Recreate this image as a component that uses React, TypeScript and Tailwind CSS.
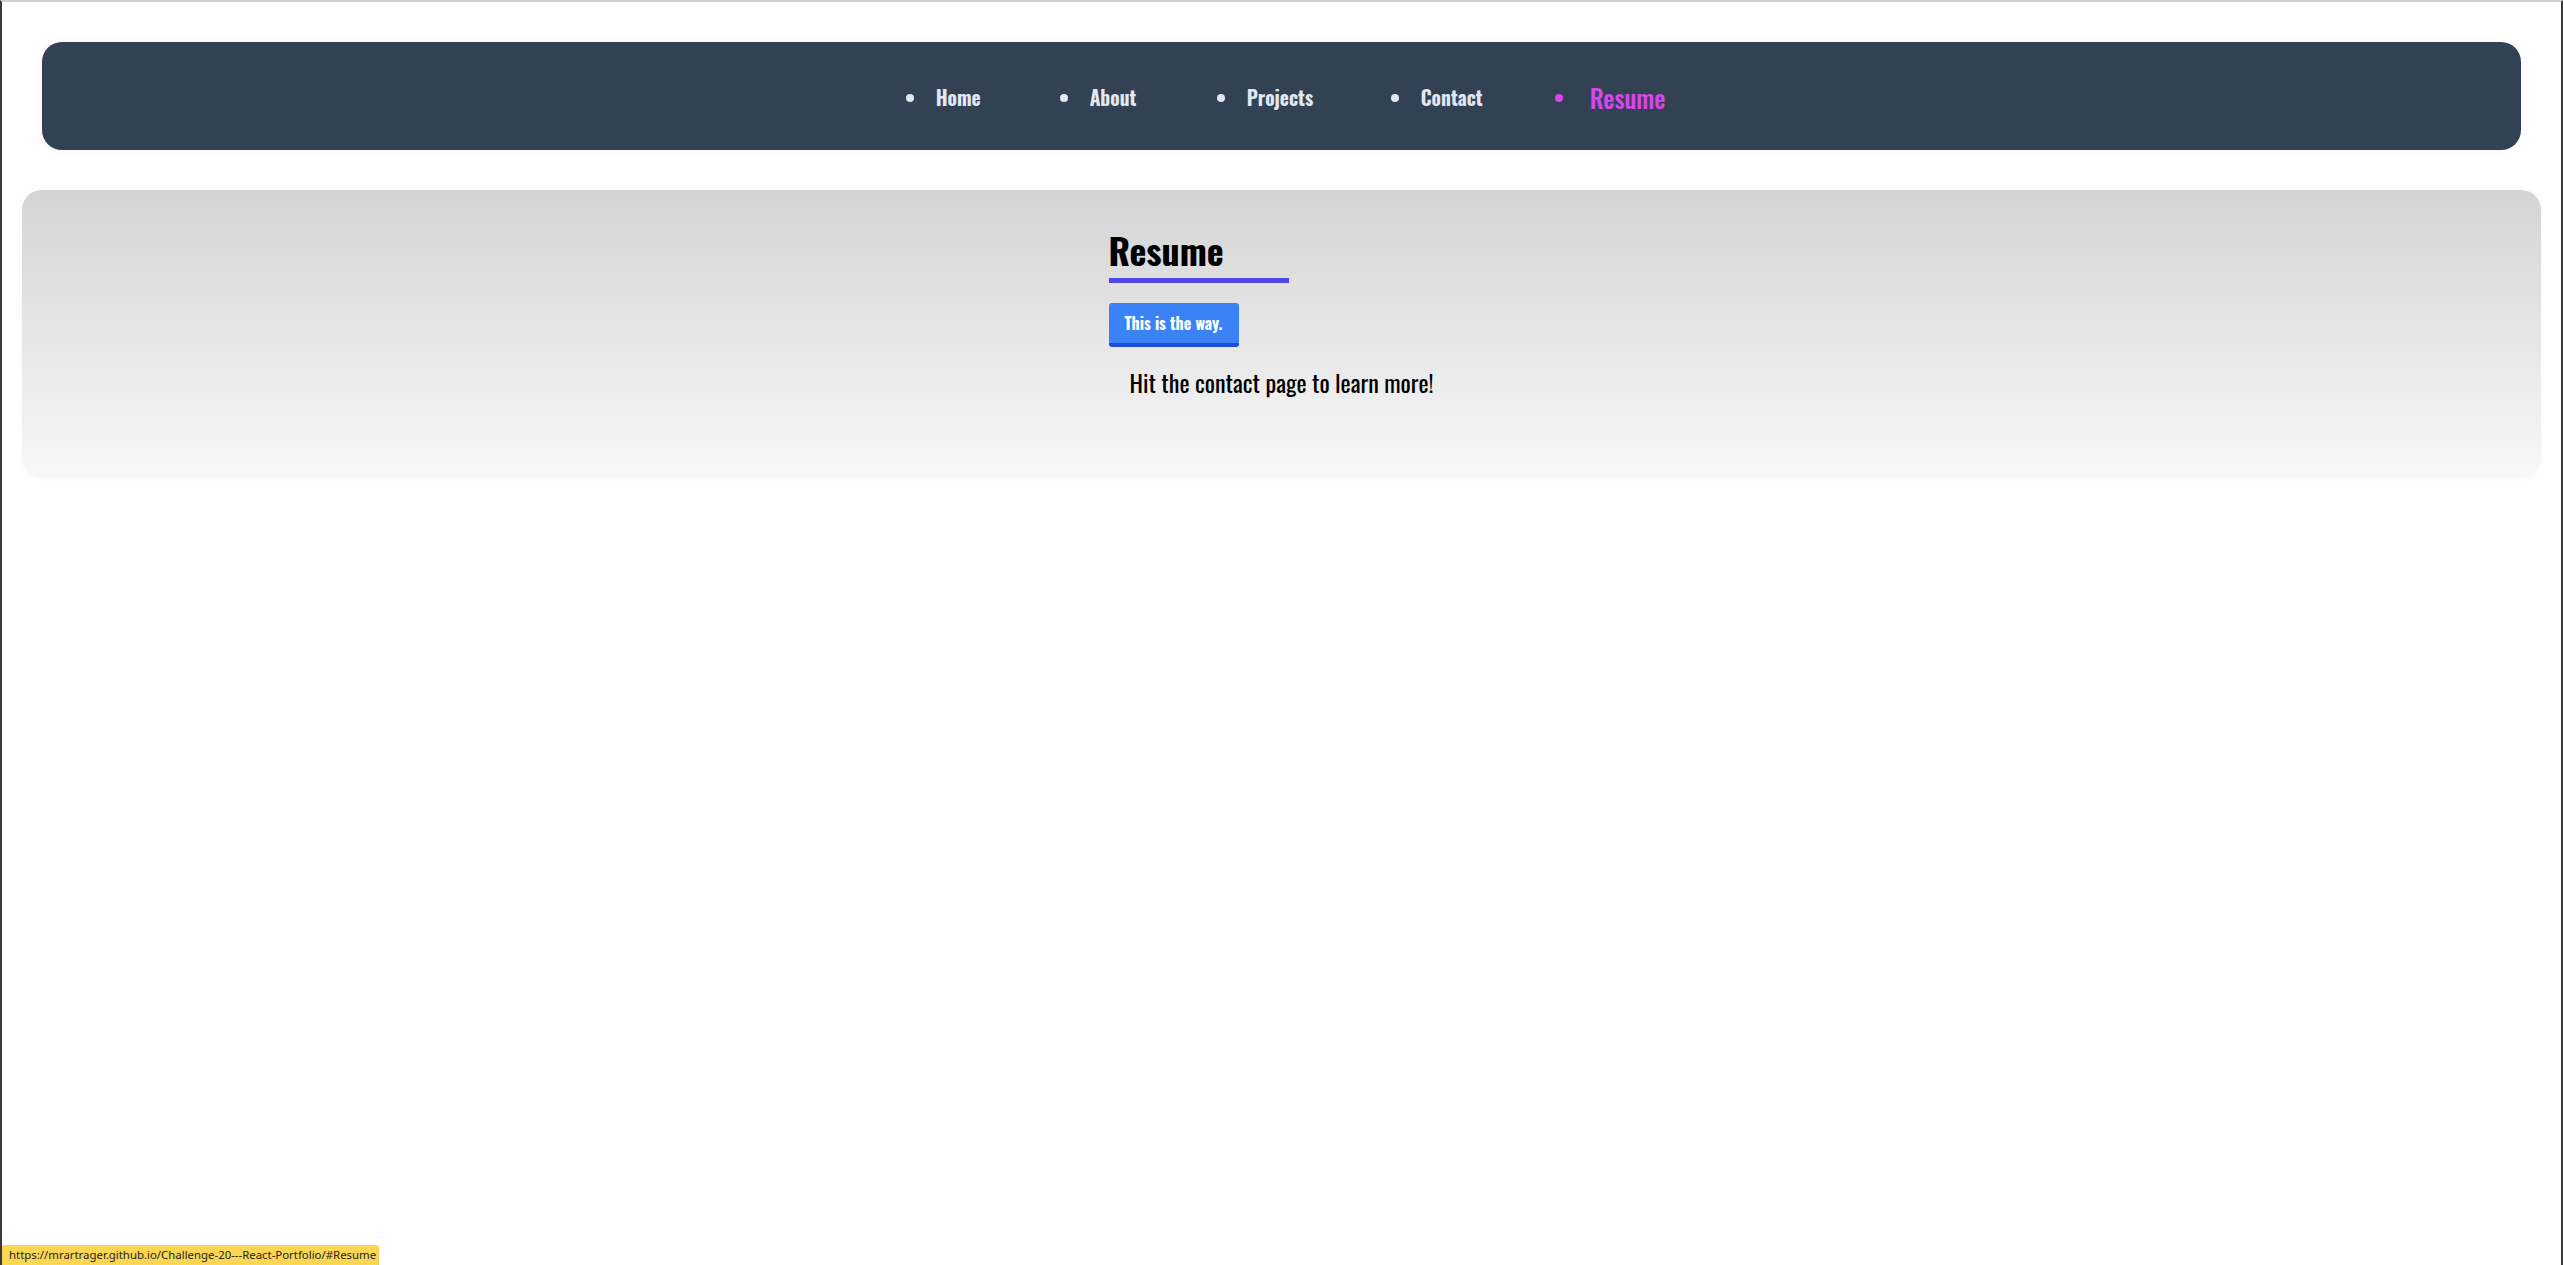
const oswald = "font-['Oswald','Liberation_Sans_Narrow','DejaVu_Sans_Condensed',sans-serif]";

const links = [
  { label: 'Home', width: 'w-[154px]' },
  { label: 'About', width: 'w-[157px]' },
  { label: 'Projects', width: 'w-[174px]' },
  { label: 'Contact', width: 'w-[164px]' },
];

function Nav() {
  return (
    <nav className="mx-[20px] flex h-[108px] items-center justify-center rounded-[20px] bg-[#334155] pt-[3px] shadow-[0_0_10px_rgba(0,0,0,0.04)]">
      <ul className={`flex items-center pl-[8px] ${oswald}`}>
        {links.map((link) => (
          <li key={link.label} className={`flex items-center gap-[22px] ${link.width}`}>
            <span className="h-[8px] w-[8px] rounded-full bg-[#e2e8f0]" />
            <a href={`#${link.label}`} className="text-[19.5px] font-bold text-[#e2e8f0]">
              {link.label}
            </a>
          </li>
        ))}
        <li className="flex items-center gap-[27px]">
          <span className="h-[8px] w-[8px] rounded-full bg-[#d946ef]" />
          <a href="#Resume" className="text-[25px] font-medium text-[#d946ef]">
            Resume
          </a>
        </li>
      </ul>
    </nav>
  );
}

function ResumePanel() {
  return (
    <section className="mt-[40px] rounded-[20px] bg-gradient-to-b from-[#d4d4d4] to-[#f8f8f8] pb-[78px] pt-[40px] shadow-[0_0_6px_rgba(0,0,0,0.03)]">
      <div className={`mx-auto w-[346px] ${oswald}`}>
        <h2 className="w-[180px] border-b-[5px] border-[#4f46e5] pb-[8px] text-[36px] font-bold leading-[40px] text-black">
          Resume
        </h2>
        <button className="mt-[20px] h-[44px] rounded-[3px] border-b-4 border-[#1d4ed8] bg-[#3b82f6] px-[16px] text-[16px] font-bold text-white">
          This is the way.
        </button>
        <p className="mt-[17px] text-center text-[24px] leading-[36px] text-black">
          Hit the contact page to learn more!
        </p>
      </div>
    </section>
  );
}

export default function App() {
  return (
    <div className="relative h-[1265px] w-full overflow-hidden border-x-2 border-t-2 border-x-[#3a3a3a] border-t-[#d0d0d0] bg-white">
      <div className="px-[20px] pt-[40px]">
        <Nav />
        <ResumePanel />
      </div>
      <div className="absolute bottom-0 left-0 flex h-[20px] items-center rounded-tr-[3px] bg-[#fbd654] pl-[7px] pr-[3px] font-['Noto_Sans',sans-serif] text-[11.4px] text-[#1f1f1f]">
        https://mrartrager.github.io/Challenge-20---React-Portfolio/#Resume
      </div>
    </div>
  );
}
